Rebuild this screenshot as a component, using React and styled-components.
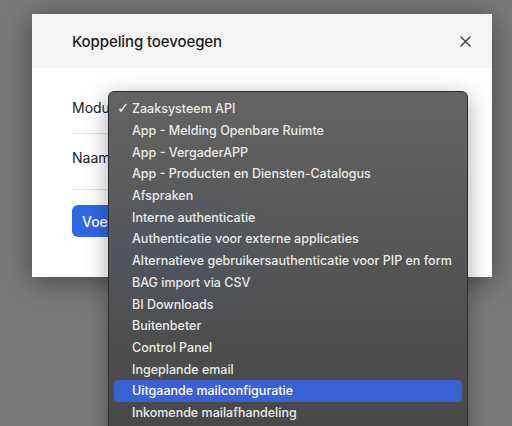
import React from "react";
import styled, { createGlobalStyle } from "styled-components";

const GlobalStyle = createGlobalStyle`
	html, body {
		margin: 0;
		padding: 0;
		background: #7a7a7a;
	}
	body {
		font-family: Inter, "Noto Sans", "Liberation Sans", sans-serif;
		-webkit-font-smoothing: antialiased;
	}
`;

const Page = styled.div`
	position: relative;
	width: 512px;
	height: 426px;
	overflow: hidden;
	padding: 14px 0 0 32px;
	box-sizing: border-box;
`;

const Dialog = styled.div`
	width: 460px;
	background: #fff;
	box-shadow: 0 4px 28px rgba(0, 0, 0, 0.45);
`;

const DialogHeader = styled.div`
	height: 54px;
	background: #f4f4f4;
	display: flex;
	align-items: center;
	justify-content: space-between;
	padding: 0 20px 0 40px;
`;

const DialogTitle = styled.h2`
	margin: 0;
	font-size: 15px;
	font-weight: 500;
	color: #1d1d1d;
	letter-spacing: -0.1px;
`;

const CloseButton = styled.button`
	border: 0;
	background: none;
	padding: 0;
	width: 14px;
	height: 14px;
	display: flex;
	align-items: center;
	justify-content: center;
	color: #444;
	cursor: pointer;
`;

const DialogBody = styled.div`
	padding: 0 40px 40px;
`;

const FieldRow = styled.div`
	display: flex;
	align-items: center;
	padding: ${(p) => p.$pad};
	border-bottom: 1px solid #e2e2e2;
	font-size: 14px;
	line-height: 20px;
	color: #222;
`;

const PrimaryButton = styled.button`
	margin-top: 15px;
	height: 32px;
	padding: 0 12px 0 10px;
	border: 0;
	border-radius: 6px;
	background: #2f68e3;
	color: #fff;
	font-family: inherit;
	font-size: 14px;
	font-weight: 500;
`;

const Menu = styled.ul`
	position: absolute;
	left: 108px;
	top: 91px;
	width: 360px;
	height: 360px;
	margin: 0;
	padding: 6px 5px;
	box-sizing: border-box;
	list-style: none;
	border-radius: 6px;
	border: 1px solid #2e2e2e;
	background:
		radial-gradient(ellipse 160px 120px at 20% 45%, rgba(70, 82, 110, 0.45), transparent 70%),
		linear-gradient(180deg, #636363 0%, #595959 35%, #4d4d4d 70%, #474747 100%);
	box-shadow: 0 6px 22px rgba(0, 0, 0, 0.35);
`;

const MenuItem = styled.li`
	height: 21.7px;
	display: flex;
	align-items: center;
	padding-left: 3px;
	border-radius: 4px;
	font-size: 12.5px;
	font-weight: 500;
	color: ${(p) => (p.$active ? "#fff" : "#e9e9e9")};
	background: ${(p) => (p.$active ? "#3a60d4" : "transparent")};
	white-space: nowrap;
`;

const Check = styled.span`
	flex: 0 0 15px;
	font-family: "DejaVu Sans", sans-serif;
	font-size: 15px;
	line-height: 1;
`;

const modules = [
	"Zaaksysteem API",
	"App - Melding Openbare Ruimte",
	"App - VergaderAPP",
	"App - Producten en Diensten-Catalogus",
	"Afspraken",
	"Interne authenticatie",
	"Authenticatie voor externe applicaties",
	"Alternatieve gebruikersauthenticatie voor PIP en form",
	"BAG import via CSV",
	"BI Downloads",
	"Buitenbeter",
	"Control Panel",
	"Ingeplande email",
	"Uitgaande mailconfiguratie",
	"Inkomende mailafhandeling",
];

const App = () => {
	const selected = 0;
	const hovered = 13;

	return (
		<>
			<GlobalStyle />
			<Page>
				<Dialog>
					<DialogHeader>
						<DialogTitle>Koppeling toevoegen</DialogTitle>
						<CloseButton aria-label="Sluiten">
							<svg width="11" height="11" viewBox="0 0 11 11">
								<path
									d="M1 1 L10 10 M10 1 L1 10"
									stroke="currentColor"
									strokeWidth="1.5"
									strokeLinecap="round"
								/>
							</svg>
						</CloseButton>
					</DialogHeader>
					<DialogBody>
						<FieldRow $pad="30px 0 15px">Module</FieldRow>
						<FieldRow $pad="14px 0 21px">Naam</FieldRow>
						<PrimaryButton>Voeg toe</PrimaryButton>
					</DialogBody>
				</Dialog>

				<Menu>
					{modules.map((name, i) => (
						<MenuItem key={name} $active={i === hovered}>
							<Check>{i === selected ? "✓" : ""}</Check>
							{name}
						</MenuItem>
					))}
				</Menu>
			</Page>
		</>
	);
};

export default App;
